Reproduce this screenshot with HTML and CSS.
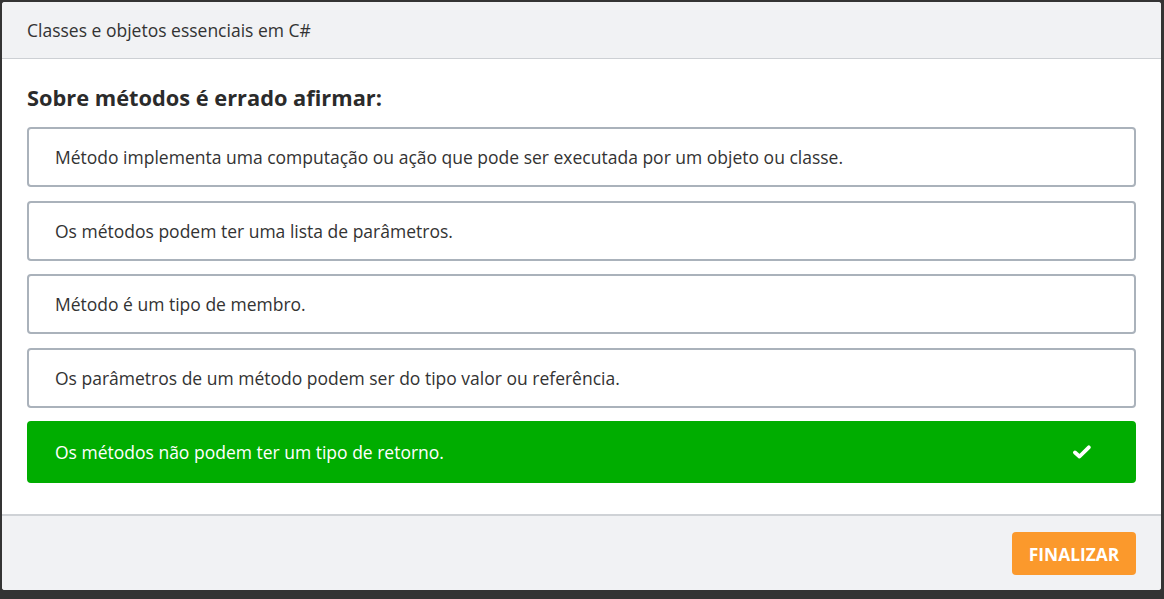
FILE: index.html
```html
<!DOCTYPE html>
<html lang="pt">
<head>
<meta charset="utf-8">
<link rel="stylesheet" href="styles.css">
</head>
<body>
<div class="modal">
  <div class="modal-header">Classes e objetos essenciais em C#</div>
  <div class="modal-body">
    <h2 class="question">Sobre métodos é errado afirmar:</h2>
    <div class="options">
      <div class="option">Método implementa uma computação ou ação que pode ser executada por um objeto ou classe.</div>
      <div class="option">Os métodos podem ter uma lista de parâmetros.</div>
      <div class="option">Método é um tipo de membro.</div>
      <div class="option">Os parâmetros de um método podem ser do tipo valor ou referência.</div>
      <div class="option option-correct">
        <span>Os métodos não podem ter um tipo de retorno.</span>
        <svg class="check" width="18" height="14" viewBox="0 0 18 14"><path d="M2 7.5 L6.5 11.5 L15.8 2.3" fill="none" stroke="#fff" stroke-width="3.8" stroke-linecap="round" stroke-linejoin="round"/></svg>
      </div>
    </div>
  </div>
  <div class="modal-footer">
    <button class="btn-finish">FINALIZAR</button>
  </div>
</div>
</body>
</html>
```

FILE: styles.css
```css
* { box-sizing: border-box; }
html, body { margin: 0; padding: 0; }
body {
  background: #343434;
  font-family: "Open Sans", "Noto Sans", sans-serif;
  color: #333;
  width: 1164px;
  height: 599px;
  padding: 2px 3px 0 2px;
}
.modal {
  width: 1159px;
  height: 588px;
  background: #fff;
  border-radius: 3px;
  display: flex;
  flex-direction: column;
  overflow: hidden;
}
.modal-header {
  height: 57px;
  background: #f1f2f4;
  border-bottom: 1px solid #cdd0d4;
  padding: 0 25px;
  display: flex;
  align-items: center;
  font-size: 17.5px;
  color: #333;
}
.modal-body {
  padding: 24px 25px 0 25px;
  height: 457px;
  border-bottom: 2px solid #cfd2d6;
}
.question {
  margin: 0;
  font-size: 21.8px;
  font-weight: 700;
  line-height: 30px;
  color: #2b2b2b;
  height: 44px;
}
.options {
  display: flex;
  flex-direction: column;
  gap: 13.5px;
}
.option {
  height: 60px;
  border: 2px solid #aab2bb;
  border-radius: 4px;
  padding: 0 26px;
  display: flex;
  align-items: center;
  font-size: 17.5px;
  color: #333;
}
.option-correct {
  height: 62px;
  background: #00ad00;
  border-color: #00ad00;
  color: #fff;
  justify-content: space-between;
  padding-right: 43px;
}
.check { display: block; }
.modal-footer {
  flex: 1;
  background: #f1f2f4;
  display: flex;
  justify-content: flex-end;
  align-items: flex-start;
  padding: 16px 25px 0 0;
}
.btn-finish {
  width: 124px;
  height: 43px;
  background: #fb992c;
  color: #fff;
  border: none;
  border-radius: 4px;
  font-family: "Open Sans", "Noto Sans", sans-serif;
  font-weight: 700;
  font-size: 17.4px;
  padding: 0;
}
```
